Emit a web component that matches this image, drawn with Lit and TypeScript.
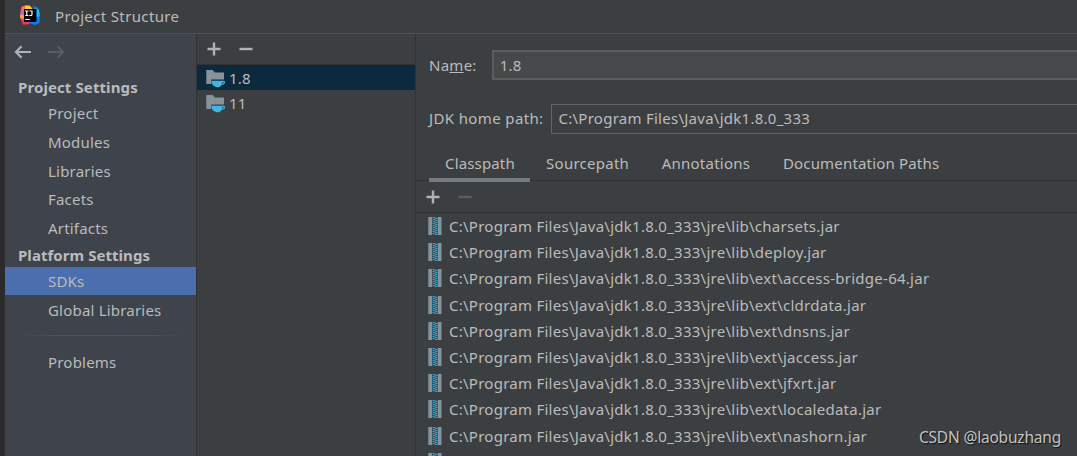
import { LitElement, html, css, svg } from "lit";
import { customElement } from "lit/decorators.js";
import { classMap } from "lit/directives/class-map.js";

const plus = (c = "#afb1b3") => html`<svg width="14" height="14" viewBox="0 0 14 14"><path d="M7 .5v13M.5 7h13" stroke=${c} stroke-width="2.4" fill="none"/></svg>`;
const minus = (c = "#afb1b3") => html`<svg width="14" height="14" viewBox="0 0 14 14"><path d="M.5 7h13" stroke=${c} stroke-width="2.4" fill="none"/></svg>`;
const arrow = (c: string, flip = false) => html`<svg width="18" height="14" viewBox="0 0 18 14"><path d=${flip ? "M1 7h14.500M10.500 1.300 16 7l-5.500 5.700" : "M17 7H2.500M7.500 1.300 2 7l5.500 5.700"} stroke=${c} stroke-width="2.2" fill="none"/></svg>`;

const folder = html`<svg width="20" height="20" viewBox="0 0 20 20">
  <path d="M.3 1h6.200l2.300 2.600H18V10.500H5.200V15H.3z" fill="#87939a"/>
  <path d="M5.300 11.800H17.300q2.200 0 1.800 1.900-.4 2-3.300 2.100-.9 1.500-2.300 2.200-1.400.7-3.600 0-4.600-1.700-4.600-6.200z" fill="#40b6e0"/>
  <path d="M16.200 13h1.600q0 1.500-1.900 1.700z" fill="#2c5063"/>
</svg>`;

const teeth = [0, 1, 2, 3, 4, 5, 6, 7, 8];
const jar = html`<svg width="14" height="18" viewBox="0 0 14 18">
  <path d="M.3 0H4v18H.3zM10 0h3.500v18H10z" fill="#87939a"/>
  <path d="M4 0h6v18H4z" fill="#34505c"/>
  ${teeth.map((i) => svg`<path d="M4.600 ${i * 2}h2.600v1H4.600zM7 ${i * 2 + 1}h2.600v1H7z" fill="#3f9cc0"/>`)}
</svg>`;

const logo = html`<svg width="21" height="21" viewBox="0 0 21 21">
  <path d="M1.500 1.500 6 .5l3 3-2 14-5-1L0 12z" fill="#f97a3a"/>
  <path d="M5 .5h4.500l3 3-7 4z" fill="#ffcc35"/>
  <path d="M.5 5.500 7 4v6l-6 2z" fill="#cf5ad5"/>
  <path d="M1 12h6l3 7-7 .7z" fill="#fe315d"/>
  <path d="M0 9.500 4 10v4L0 13z" fill="#ff9d3b"/>
  <path d="m13 1 5 1.500 2 5.500-.5 10-4.500 2-6-2 6-8z" fill="#087cfa"/>
  <path d="m15 3 4 2 .5 6-5 2z" fill="#20bdfa"/>
  <path d="M4 4h12.500v13H4z" fill="#050305"/>
  <path d="M5.200 6h3.200M6.800 6v4.500M5.200 10.500h3.200M9.500 6h2.500v3.300q0 1.300-1.300 1.200H9.300M5.200 14.500h4.600" stroke="#fff" stroke-width="1.200" fill="none"/>
</svg>`;

@customElement("app-root")
export class AppRoot extends LitElement {
  static styles = css`
    :host { display: block; width: 1077px; height: 456px; overflow: hidden; position: relative; background: #3c3f41; color: #bbbbbb; font: 15px/20px "Noto Sans", sans-serif; letter-spacing: .26px; white-space: nowrap; }
    * { box-sizing: border-box; }
    svg { display: block; flex: none; }
    .window { height: 456px; border-left: 5px solid #2b2b2b; display: flex; flex-direction: column; }
    .title { height: 34px; flex: none; border-bottom: 1px solid #515151; display: flex; align-items: center; gap: 14px; padding: 0 0 2px 15px; letter-spacing: .36px; }
    .body { flex: 1; min-height: 0; display: grid; grid-template-columns: 192px 219px 1fr; }
    .side { background: #3e434c; border-right: 1px solid #323232; }
    .nav { height: 36px; display: flex; align-items: center; gap: 15px; padding-left: 9px; }
    .head { font-weight: 700; letter-spacing: .05px; padding: 0 0 0 13px; height: 24px; line-height: 25px; }
    .first { height: 29px; line-height: 35px; letter-spacing: .1px; }
    .item { height: 28.8px; line-height: 28px; padding-left: 43px; letter-spacing: .2px; }
    .item.on { background: #4b6eaf; height: 28px; }
    .item.after { height: 30px; line-height: 31px; }
    .sep { height: 1px; margin: 10px 8px 12px 13px; background: linear-gradient(90deg, #52505000, #525050 20%, #525050 80%, #52505000); }
    .list { border-right: 1px solid #323232; }
    .bar { display: flex; align-items: center; gap: 18px; height: 31px; padding-left: 10px; border-bottom: 1px solid #323232; }
    .sdk { height: 25px; display: flex; align-items: center; gap: 3px; padding: 2px 0 0 9px; line-height: 25px; }
    .sdk.on { background: #0d293e; }
    .main { min-width: 0; overflow: hidden; }
    .field { display: flex; align-items: center; padding-left: 13px; }
    .name { margin-top: 16px; height: 30px; gap: 15px; }
    .home { margin-top: 24px; height: 30px; gap: 7px; }
    .home .label { letter-spacing: .37px; padding-bottom: 2px; }
    .box { flex: 1; height: 30px; line-height: 26px; border: 1px solid #646464; border-right: 0; padding-left: 7px; }
    .name .box { border: 2px solid #5a5d5e; border-right: 0; background: #45494a; padding-left: 6px; }
    .tabs { height: 47px; display: flex; padding-left: 13px; border-bottom: 1px solid #323232; letter-spacing: .25px; }
    .tab { height: 48px; padding: 19px 16.300px 0 16.300px; }
    .tab.on { border-bottom: 4px solid #747a80; padding: 19px 15px 0 16px; letter-spacing: .15px; }
    .tab:last-child { letter-spacing: .18px; }
    .tools { height: 32px; }
    .jar { height: 26.2px; display: flex; align-items: center; gap: 7px; padding-left: 12px; }
    .mark { position: absolute; right: 16px; bottom: 9px; font-size: 15.5px; letter-spacing: -.2px; color: #c4c4c4; text-shadow: 1px 1px 1px #111; }
  `;

  render() {
    const jars = ["charsets", "deploy", "ext\\access-bridge-64", "ext\\cldrdata", "ext\\dnsns", "ext\\jaccess", "ext\\jfxrt", "ext\\localedata", "ext\\nashorn"];
    return html`<div class="window">
      <div class="title">${logo}<span>Project Structure</span></div>
      <div class="body">
        <div class="side">
          <div class="nav">${arrow("#afb1b3")}${arrow("#5a5d5e", true)}</div>
          <div class="head first">Project Settings</div>
          ${["Project", "Modules", "Libraries", "Facets", "Artifacts"].map((t) => html`<div class="item">${t}</div>`)}
          <div class="head">Platform Settings</div>
          <div class="item on">SDKs</div>
          <div class="item after">Global Libraries</div>
          <div class="sep"></div>
          <div class="item">Problems</div>
        </div>
        <div class="list">
          <div class="bar">${plus()}${minus()}</div>
          ${["1.8", "11"].map((t, i) => html`<div class=${classMap({ sdk: true, on: i === 0 })}>${folder}<span>${t}</span></div>`)}
        </div>
        <div class="main">
          <div class="field name"><span>Na<u>m</u>e:</span><div class="box">1.8</div></div>
          <div class="field home"><span class="label">JDK home path:</span><div class="box">C:\\Program Files\\Java\\jdk1.8.0_333</div></div>
          <div class="tabs">${["Classpath", "Sourcepath", "Annotations", "Documentation Paths"].map((t, i) => html`<div class=${classMap({ tab: true, on: i === 0 })}>${t}</div>`)}</div>
          <div class="bar tools">${plus()}${minus("#5a5d5e")}</div>
          <div class="jars">
            ${jars.map((j) => html`<div class="jar">${jar}<span>C:\\Program Files\\Java\\jdk1.8.0_333\\jre\\lib\\${j}.jar</span></div>`)}
            <div class="jar">${jar}</div>
          </div>
        </div>
      </div>
      <div class="mark">CSDN @laobuzhang</div>
    </div>`;
  }
}
